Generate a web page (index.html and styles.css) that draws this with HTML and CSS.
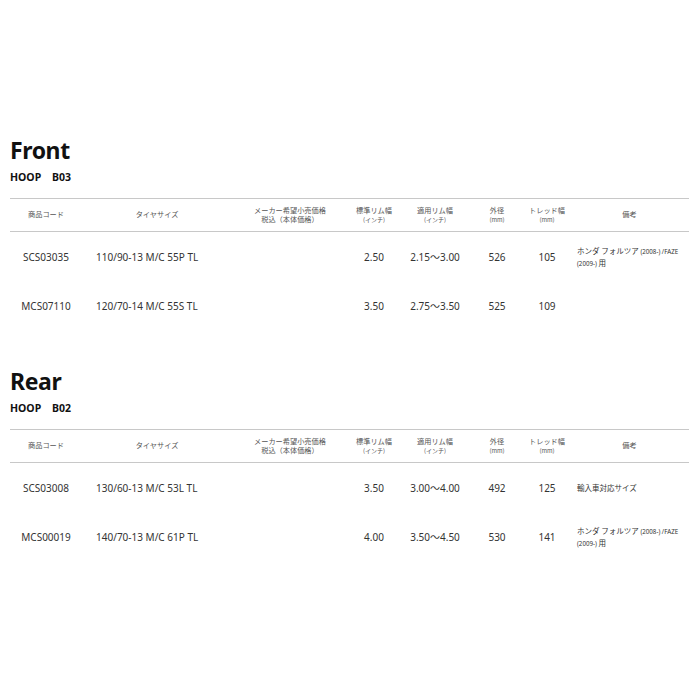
FILE: index.html
```html
<!DOCTYPE html>
<html lang="ja">
<head>
<meta charset="utf-8">
<link rel="stylesheet" href="styles.css">
</head>
<body>
<div class="page">
  <section class="block">
    <h2 class="title">Front</h2>
    <p class="model">HOOP&nbsp;&nbsp;&nbsp;&nbsp;B03</p>
    <table class="spec">
      <colgroup>
        <col class="c1"><col class="c2"><col class="c3"><col class="c4"><col class="c5"><col class="c6"><col class="c7"><col class="c8">
      </colgroup>
      <thead>
        <tr>
          <th>商品コード</th>
          <th>タイヤサイズ</th>
          <th><span class="ln">メーカー希望小売価格</span><span class="ln">税込（本体価格）</span></th>
          <th><span class="ln">標準リム幅</span><span class="ln sub">(インチ)</span></th>
          <th><span class="ln">適用リム幅</span><span class="ln sub">(インチ)</span></th>
          <th><span class="ln">外径</span><span class="ln sub">(mm)</span></th>
          <th><span class="ln">トレッド幅</span><span class="ln sub">(mm)</span></th>
          <th>備考</th>
        </tr>
      </thead>
      <tbody>
        <tr>
          <td>SCS03035</td>
          <td class="size">110/90-13 M/C 55P TL</td>
          <td></td>
          <td>2.50</td>
          <td>2.15〜3.00</td>
          <td>526</td>
          <td>105</td>
          <td class="note">ホンダ フォルツア <span class="small">(2008-) /FAZE</span><br><span class="small">(2009-)</span> 用</td>
        </tr>
        <tr>
          <td>MCS07110</td>
          <td class="size">120/70-14 M/C 55S TL</td>
          <td></td>
          <td>3.50</td>
          <td>2.75〜3.50</td>
          <td>525</td>
          <td>109</td>
          <td class="note"></td>
        </tr>
      </tbody>
    </table>
  </section>

  <section class="block">
    <h2 class="title">Rear</h2>
    <p class="model">HOOP&nbsp;&nbsp;&nbsp;&nbsp;B02</p>
    <table class="spec">
      <colgroup>
        <col class="c1"><col class="c2"><col class="c3"><col class="c4"><col class="c5"><col class="c6"><col class="c7"><col class="c8">
      </colgroup>
      <thead>
        <tr>
          <th>商品コード</th>
          <th>タイヤサイズ</th>
          <th><span class="ln">メーカー希望小売価格</span><span class="ln">税込（本体価格）</span></th>
          <th><span class="ln">標準リム幅</span><span class="ln sub">(インチ)</span></th>
          <th><span class="ln">適用リム幅</span><span class="ln sub">(インチ)</span></th>
          <th><span class="ln">外径</span><span class="ln sub">(mm)</span></th>
          <th><span class="ln">トレッド幅</span><span class="ln sub">(mm)</span></th>
          <th>備考</th>
        </tr>
      </thead>
      <tbody>
        <tr>
          <td>SCS03008</td>
          <td class="size">130/60-13 M/C 53L TL</td>
          <td></td>
          <td>3.50</td>
          <td>3.00〜4.00</td>
          <td>492</td>
          <td>125</td>
          <td class="note">輸入車対応サイズ</td>
        </tr>
        <tr>
          <td>MCS00019</td>
          <td class="size">140/70-13 M/C 61P TL</td>
          <td></td>
          <td>4.00</td>
          <td>3.50〜4.50</td>
          <td>530</td>
          <td>141</td>
          <td class="note">ホンダ フォルツア <span class="small">(2008-) /FAZE</span><br><span class="small">(2009-)</span> 用</td>
        </tr>
      </tbody>
    </table>
  </section>
</div>
</body>
</html>
```

FILE: styles.css
```css
html, body {
  margin: 0;
  padding: 0;
  background: #fff;
}

body {
  font-family: "Noto Sans", "Noto Sans CJK JP", sans-serif;
  color: #222;
}

.page {
  padding: 136px 11px 0 10px;
}

.block {
  height: 231px;
}

.title {
  margin: 0;
  font-size: 23px;
  line-height: 28px;
  font-weight: 700;
  color: #111;
  letter-spacing: -0.4px;
}

.model {
  margin: 6px 0 0;
  font-size: 10.5px;
  line-height: 14px;
  font-weight: 700;
  color: #111;
}

.spec {
  margin-top: 14px;
  width: 679px;
  border-collapse: collapse;
  table-layout: fixed;
}

.c1 { width: 72px; }
.c2 { width: 150px; }
.c3 { width: 116px; }
.c4 { width: 52px; }
.c5 { width: 70px; }
.c6 { width: 54px; }
.c7 { width: 46px; }
.c8 { width: 119px; }

.spec th {
  border-top: 1px solid #c8c8c8;
  border-bottom: 1px solid #c8c8c8;
  height: 32px;
  padding: 0;
  font-family: "Noto Sans CJK JP", sans-serif;
  font-weight: 400;
  font-size: 7.2px;
  line-height: 9.5px;
  color: #555;
  text-align: center;
  vertical-align: middle;
}

.spec th .ln {
  display: block;
}

.spec th .sub {
  font-size: 6px;
}

.spec td {
  height: 49px;
  padding: 0;
  font-size: 10px;
  color: #333;
  text-align: center;
  vertical-align: middle;
  white-space: nowrap;
}

.spec td.size {
  text-align: left;
  padding-left: 14px;
}

.spec td.note {
  text-align: left;
  padding-left: 7px;
  font-family: "Noto Sans CJK JP", sans-serif;
  font-size: 7.5px;
  line-height: 11px;
  white-space: normal;
}

.spec td.note .small {
  font-family: "Noto Sans", sans-serif;
  font-size: 6.2px;
}
```
